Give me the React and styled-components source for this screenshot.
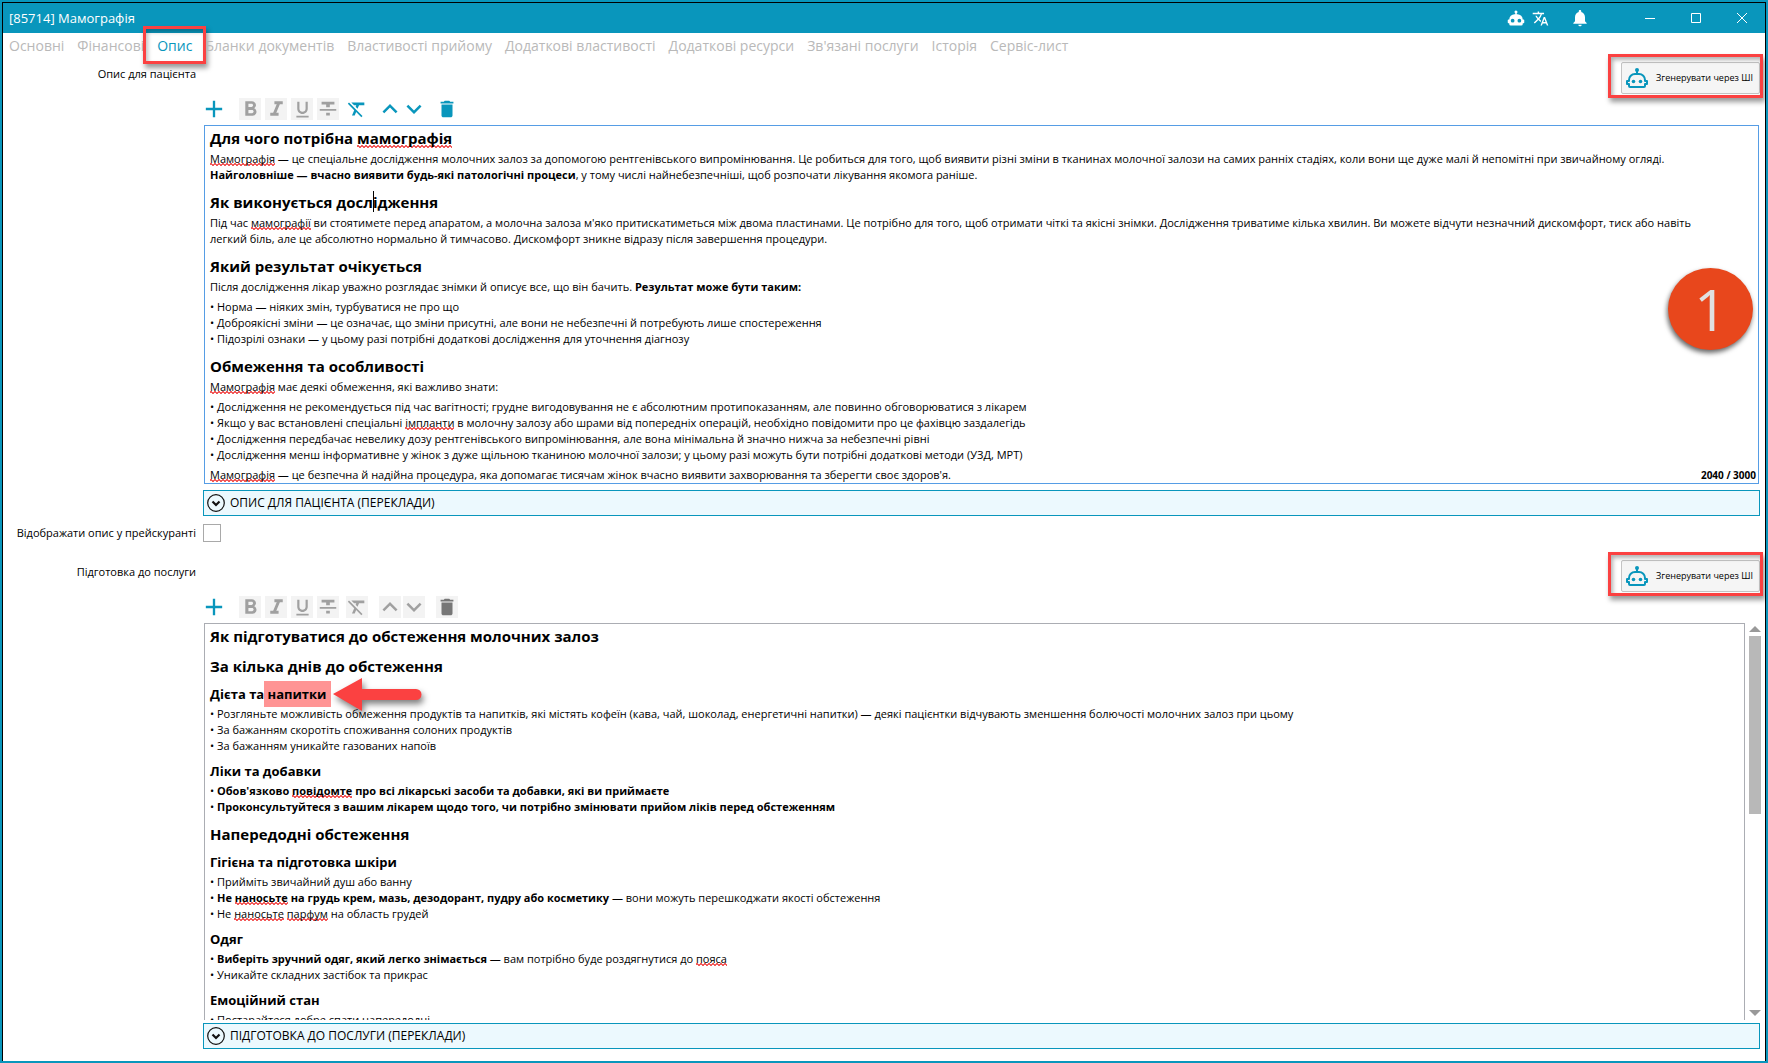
import React from 'react';
import { useState } from 'react';
import styled, { createGlobalStyle } from 'styled-components';
import {
  MdAdd,
  MdDelete,
  MdExpandLess,
  MdExpandMore,
  MdFormatBold,
  MdFormatClear,
  MdFormatItalic,
  MdFormatStrikethrough,
  MdFormatUnderlined,
  MdNotifications,
  MdTranslate,
} from 'react-icons/md';

const tabs = [
  'Основні',
  'Фінансові',
  'Опис',
  'Бланки документів',
  'Властивості прийому',
  'Додаткові властивості',
  'Додаткові ресурси',
  "Зв'язані послуги",
  'Історія',
  'Сервіс-лист',
];

function RobotSolid() {
  return (
    <svg width="18" height="18" viewBox="0 0 24 24" fill="currentColor" fillRule="evenodd">
      <path d="M12 2a2 2 0 0 1 2 2c0 .74-.4 1.39-1 1.73V7h1a7 7 0 0 1 7 7h1a1 1 0 0 1 1 1v3a1 1 0 0 1-1 1h-1v1a2 2 0 0 1-2 2H5a2 2 0 0 1-2-2v-1H2a1 1 0 0 1-1-1v-3a1 1 0 0 1 1-1h1a7 7 0 0 1 7-7h1V5.73A2 2 0 0 1 12 2zM7.500 13a2.500 2.500 0 1 0 0 5 2.500 2.500 0 0 0 0-5zm9 0a2.500 2.500 0 1 0 0 5 2.500 2.500 0 0 0 0-5z" />
    </svg>
  );
}

function RobotOutline() {
  return (
    <svg width="24" height="24" viewBox="0 0 24 24" fill="none" stroke="#0996bc" strokeWidth="2">
      <path d="M12 4v4M10 8h4a6 6 0 0 1 6 6v1h2v3h-2v2a1 1 0 0 1-1 1H5a1 1 0 0 1-1-1v-2H2v-3h2v-1a6 6 0 0 1 6-6z" strokeLinejoin="round" />
      <circle cx="12" cy="4" r="2" fill="#0996bc" stroke="none" />
      <circle cx="8.500" cy="15.500" r="1.800" fill="#0996bc" stroke="none" />
      <circle cx="15.500" cy="15.500" r="1.800" fill="#0996bc" stroke="none" />
    </svg>
  );
}

function EditorTools({ active }) {
  return (
    <Toolbar>
      <ToolButton $on aria-label="Додати"><MdAdd size={28} /></ToolButton>
      <ToolGroup $gap={4}>
        <ToolButton aria-label="Жирний"><MdFormatBold size={25} /></ToolButton>
        <ToolButton aria-label="Курсив"><MdFormatItalic size={25} /></ToolButton>
        <ToolButton aria-label="Підкреслений"><MdFormatUnderlined size={21} /></ToolButton>
        <ToolButton aria-label="Закреслений"><MdFormatStrikethrough size={22} /></ToolButton>
      </ToolGroup>
      <ToolButton $on={active} aria-label="Очистити формат"><MdFormatClear size={22} /></ToolButton>
      <ToolGroup $gap={2}>
        <ToolButton $on={active} aria-label="Вгору"><MdExpandLess size={30} /></ToolButton>
        <ToolButton $on={active} aria-label="Вниз"><MdExpandMore size={30} /></ToolButton>
      </ToolGroup>
      <ToolButton $on={active} $dark aria-label="Видалити"><MdDelete size={22} /></ToolButton>
    </Toolbar>
  );
}

function GenerateButton() {
  return (
    <Callout>
      <Generate>
        <RobotOutline />
        Згенерувати через ШІ
      </Generate>
    </Callout>
  );
}

function Translations({ children, tight }) {
  return (
    <TranslationsBar $tight={tight}>
      <svg width="18" height="18" viewBox="0 0 18 18" fill="none" stroke="#111">
        <circle cx="9" cy="9" r="8.300" strokeWidth="1.200" />
        <path d="M5.500 7.500L9 11l3.500-3.500" strokeWidth="2.200" />
      </svg>
      {children}
    </TranslationsBar>
  );
}

function App() {
  const [activeTab, setActiveTab] = useState('Опис')
  const [inPriceList, setInPriceList] = useState(false)

  return (
    <Window>
      <GlobalStyle />
      <TitleBar>
        <WindowTitle>[85714] Мамографія</WindowTitle>
        <TitleIcons>
          <TitleButton aria-label="Асистент"><RobotSolid /></TitleButton>
          <TitleButton aria-label="Мова"><MdTranslate size={17} /></TitleButton>
        </TitleIcons>
        <TitleButton aria-label="Сповіщення"><MdNotifications size={20} /></TitleButton>
        <WindowControls>
          <TitleButton aria-label="Згорнути">
            <svg width="10" height="10" stroke="currentColor"><path d="M0 5.500h10" /></svg>
          </TitleButton>
          <TitleButton aria-label="Розгорнути">
            <svg width="10" height="10" stroke="currentColor" fill="none"><path d="M.5.5h9v9h-9z" /></svg>
          </TitleButton>
          <TitleButton aria-label="Закрити">
            <svg width="10" height="10" stroke="currentColor"><path d="M0 0l10 10M10 0L0 10" /></svg>
          </TitleButton>
        </WindowControls>
      </TitleBar>

      <Tabs>
        {tabs.map((tab) =>
          <Tab key={tab} className={activeTab === tab ? 'active' : ''} onClick={() => setActiveTab(tab)}>
            {tab}
          </Tab>
        )}
      </Tabs>

      <Form>
        <FieldName>Опис для пацієнта</FieldName>
        <Field>
          <GenerateButton />
          <EditorTools active />
          <Editor $focused>
            <h2>Для чого потрібна <Typo>мамографія</Typo></h2>
            <p>
              <Typo>Мамографія</Typo> — це спеціальне дослідження молочних залоз за допомогою рентгенівського випромінювання. Це робиться для того, щоб виявити різні зміни в тканинах молочної залози на самих ранніх стадіях, коли вони ще дуже малі й непомітні при звичайному огляді.
              <br />
              <b>Найголовніше — вчасно виявити будь-які патологічні процеси</b>, у тому числі найнебезпечніші, щоб розпочати лікування якомога раніше.
            </p>
            <h2>Як виконується досл<Caret />ідження</h2>
            <p>
              Під час <Typo>мамографії</Typo> ви стоятимете перед апаратом, а молочна залоза м'яко притискатиметься між двома пластинами. Це потрібно для того, щоб отримати чіткі та якісні знімки. Дослідження триватиме кілька хвилин. Ви можете відчути незначний дискомфорт, тиск або навіть легкий біль, але це абсолютно нормально й тимчасово. Дискомфорт зникне відразу після завершення процедури.
            </p>
            <h2>Який результат очікується</h2>
            <p>Після дослідження лікар уважно розглядає знімки й описує все, що він бачить. <b>Результат може бути таким:</b></p>
            <ul>
              <li>Норма — ніяких змін, турбуватися не про що</li>
              <li>Доброякісні зміни — це означає, що зміни присутні, але вони не небезпечні й потребують лише спостереження</li>
              <li>Підозрілі ознаки — у цьому разі потрібні додаткові дослідження для уточнення діагнозу</li>
            </ul>
            <h2>Обмеження та особливості</h2>
            <p><Typo>Мамографія</Typo> має деякі обмеження, які важливо знати:</p>
            <ul>
              <li>Дослідження не рекомендується під час вагітності; грудне вигодовування не є абсолютним протипоказанням, але повинно обговорюватися з лікарем</li>
              <li>Якщо у вас встановлені спеціальні <Typo>імпланти</Typo> в молочну залозу або шрами від попередніх операцій, необхідно повідомити про це фахівцю заздалегідь</li>
              <li>Дослідження передбачає невелику дозу рентгенівського випромінювання, але вона мінімальна й значно нижча за небезпечні рівні</li>
              <li>Дослідження менш інформативне у жінок з дуже щільною тканиною молочної залози; у цьому разі можуть бути потрібні додаткові методи (УЗД, МРТ)</li>
            </ul>
            <p><Typo>Мамографія</Typo> — це безпечна й надійна процедура, яка допомагає тисячам жінок вчасно виявити захворювання та зберегти своє здоров'я.</p>
            <Counter>2040 / 3000</Counter>
            <StepBadge>1</StepBadge>
          </Editor>
          <Translations>ОПИС ДЛЯ ПАЦІЄНТА (ПЕРЕКЛАДИ)</Translations>
        </Field>

        <CheckName htmlFor="priceList">Відображати опис у прейскуранті</CheckName>
        <CheckField>
          <CheckBox
            id="priceList"
            type="checkbox"
            checked={inPriceList}
            onChange={() => setInPriceList(!inPriceList)}
          />
        </CheckField>

        <FieldName>Підготовка до послуги</FieldName>
        <Field>
          <GenerateButton />
          <EditorTools />
          <ScrollArea>
            <Editor $open>
              <h2>Як підготуватися до обстеження молочних залоз</h2>
              <h2>За кілька днів до обстеження</h2>
              <h3>
                Дієта та<Marked> напитки
                  <Arrow width="96" height="38" viewBox="0 0 96 38">
                    <path d="M2 17L31 1v11h54a5 5 0 0 1 0 11H31v11z" fill="#fb4141" />
                  </Arrow>
                </Marked>
              </h3>
              <ul>
                <li>Розгляньте можливість обмеження продуктів та напитків, які містять кофеїн (кава, чай, шоколад, енергетичні напитки) — деякі пацієнтки відчувають зменшення болючості молочних залоз при цьому</li>
                <li>За бажанням скоротіть споживання солоних продуктів</li>
                <li>За бажанням уникайте газованих напоїв</li>
              </ul>
              <h3>Ліки та добавки</h3>
              <ul>
                <li><b>Обов'язково <Typo>повідомте</Typo> про всі лікарські засоби та добавки, які ви приймаєте</b></li>
                <li><b>Проконсультуйтеся з вашим лікарем щодо того, чи потрібно змінювати прийом ліків перед обстеженням</b></li>
              </ul>
              <h2>Напередодні обстеження</h2>
              <h3>Гігієна та підготовка шкіри</h3>
              <ul>
                <li>Прийміть звичайний душ або ванну</li>
                <li><b>Не <Typo>наносьте</Typo> на грудь крем, мазь, дезодорант, пудру або косметику</b> — вони можуть перешкоджати якості обстеження</li>
                <li>Не <Typo>наносьте</Typo> <Typo>парфум</Typo> на область грудей</li>
              </ul>
              <h3>Одяг</h3>
              <ul>
                <li><b>Виберіть зручний одяг, який легко знімається</b> — вам потрібно буде роздягнутися до <Typo>пояса</Typo></li>
                <li>Уникайте складних застібок та прикрас</li>
              </ul>
              <h3>Емоційний стан</h3>
              <ul>
                <li>Постарайтеся добре спати напередодні</li>
              </ul>
            </Editor>
            <ScrollBar>
              <svg width="12" height="6"><path d="M6 0l6 6H0z" fill="#999" /></svg>
              <ScrollTrack><ScrollThumb /></ScrollTrack>
              <svg width="12" height="6"><path d="M0 0h12L6 6z" fill="#999" /></svg>
            </ScrollBar>
          </ScrollArea>
          <Translations tight>ПІДГОТОВКА ДО ПОСЛУГИ (ПЕРЕКЛАДИ)</Translations>
        </Field>
      </Form>
    </Window>
  )
}

export default App;

const GlobalStyle = createGlobalStyle`
*{
  box-sizing:border-box;
}
body{
  margin:0;
  font-family:"Open Sans", "Noto Sans", sans-serif;
  font-size:11px;
  line-height:16px;
  color:#000;
  background:#0996bc;
}
button{
  font:inherit;
  padding:0;
  border:0;
  background:none;
}
svg{
  display:block;
  flex:none;
}
`

const Window = styled.div`
display:flex;
flex-direction:column;
height:100vh;
overflow:hidden;
background:#fff;
border:2px solid #0996bc;
box-shadow:inset 1px 1px #000, inset -1px 0 #000;
`

const TitleBar = styled.header`
display:flex;
align-items:center;
flex:none;
height:30px;
margin:1px 1px 0;
padding:0 18px 0 6px;
color:#fff;
background:#0996bc;
`

const WindowTitle = styled.h1`
flex:1;
margin:0;
font-size:13px;
font-weight:400;
`

const TitleIcons = styled.div`
display:flex;
gap:7px;
margin-right:21px;
`

const TitleButton = styled.button`
display:flex;
align-items:center;
color:#fff;
`

const WindowControls = styled.div`
display:flex;
gap:36px;
margin-left:55px;
`

const Tabs = styled.nav`
display:flex;
flex:none;
gap:13px;
height:26px;
padding-left:7px;
`

const Tab = styled.button`
position:relative;
font-size:14px;
white-space:nowrap;
color:#b9b9b9;
&.active{
  color:#0996bc;
}
&.active::after{
  content:'';
  position:absolute;
  inset:-7px -14px -5px;
  border:3px solid #fb4141;
  box-shadow:2px 4px 5px rgba(0,0,0,.4), inset 2px 3px 4px rgba(0,0,0,.25);
}
`

const Form = styled.div`
display:grid;
grid-template-columns:194px minmax(0, 1fr);
grid-template-rows:auto auto minmax(0, 1fr);
column-gap:7px;
flex:1;
min-height:0;
padding:3px 6px 12px 0;
`

const FieldName = styled.div`
padding-top:4px;
text-align:right;
`

const Field = styled.section`
display:flex;
flex-direction:column;
min-width:0;
min-height:0;
`

const Callout = styled.div`
align-self:flex-end;
flex:none;
position:relative;
&::after{
  content:'';
  position:absolute;
  inset:-8px -3px -4px -13px;
  border:3px solid #fb4141;
  box-shadow:2px 4px 5px rgba(0,0,0,.4), inset 2px 3px 4px rgba(0,0,0,.3);
  pointer-events:none;
}
`

const Generate = styled.button`
display:flex;
align-items:center;
gap:7px;
width:139px;
height:32px;
padding-left:3px;
font-size:9px;
white-space:nowrap;
border:1px solid #c4c4c4;
border-radius:2px;
background:#f5f5f5;
`

const Toolbar = styled.div`
display:flex;
align-items:center;
flex:none;
gap:11px;
height:22px;
margin:4px 0 5px;
`

const ToolGroup = styled.div`
display:flex;
gap:${(props) => props.$gap}px;
&:first-of-type{
  margin:0 -4px 0 3px;
}
`

const ToolButton = styled.button`
display:flex;
align-items:center;
justify-content:center;
width:22px;
height:22px;
color:${(props) => props.$on ? '#0996bc' : props.$dark ? '#777' : '#a0a0a0'};
background:${(props) => props.$on ? 'none' : '#f3f3f3'};
`

const Editor = styled.div`
position:relative;
flex:1;
min-width:0;
overflow:hidden;
margin:0 1px;
padding:1px 32px 0 5px;
border:1px solid ${(props) => props.$focused ? '#569de5' : '#abadb3'};
border-bottom-width:${(props) => props.$open ? 0 : 1}px;
h2{
  margin:8px 0 2px;
  font-size:15px;
  line-height:22px;
}
h3{
  margin:8px 0 3px;
  font-size:13px;
  line-height:18px;
}
h2:first-child{
  margin-top:0;
}
p{
  margin:0 0 4px;
}
ul{
  margin:0 0 4px;
  padding:0;
  list-style:none;
}
li::before{
  content:'• ';
}
p:last-of-type{
  margin-bottom:0;
}
`

const Typo = styled.span`
background:
  linear-gradient(45deg, transparent 40%, #f25a5a 40%, #f25a5a 60%, transparent 60%) 0 100% / 4px 3px repeat-x,
  linear-gradient(135deg, transparent 40%, #f25a5a 40%, #f25a5a 60%, transparent 60%) 2px 100% / 4px 3px repeat-x;
`

const Caret = styled.span`
position:absolute;
height:21px;
border-left:1px solid #000;
`

const Marked = styled.mark`
position:relative;
padding:4px 5px 4px 0;
color:inherit;
background:#ff9494;
`

const Arrow = styled.svg`
position:absolute;
left:100%;
top:-4px;
filter:drop-shadow(2px 4px 3px rgba(0,0,0,.5));
`

const Counter = styled.div`
position:absolute;
right:2px;
bottom:0;
font-size:10px;
font-weight:700;
`

const StepBadge = styled.div`
position:absolute;
right:5px;
top:142px;
display:flex;
align-items:center;
justify-content:center;
width:85px;
height:82px;
font-size:57px;
color:#e0e0e0;
border-radius:50%;
background:#e8471c;
box-shadow:-1px 3px 5px rgba(0,0,0,.6);
`

const TranslationsBar = styled.button`
display:flex;
align-items:center;
flex:none;
gap:5px;
height:26px;
margin-top:${(props) => props.$tight ? 3 : 6}px;
padding-left:3px;
font-size:12px;
border:1px solid #0996bc;
background:#ecf9fe;
`

const CheckName = styled.label`
padding-top:9px;
text-align:right;
white-space:nowrap;
`

const CheckField = styled.div`
height:44px;
padding-top:8px;
`

const CheckBox = styled.input`
appearance:none;
display:block;
width:18px;
height:18px;
margin:0;
border:1px solid #a9a9a9;
background:#fff;
&:checked{
  background:#0996bc;
}
`

const ScrollArea = styled.div`
display:flex;
flex:1;
min-height:0;
`

const ScrollBar = styled.div`
display:flex;
flex-direction:column;
gap:4px;
width:12px;
margin:3px -1px 4px 3px;
`

const ScrollTrack = styled.div`
flex:1;
`

const ScrollThumb = styled.div`
height:48%;
background:#b8b8b8;
`
